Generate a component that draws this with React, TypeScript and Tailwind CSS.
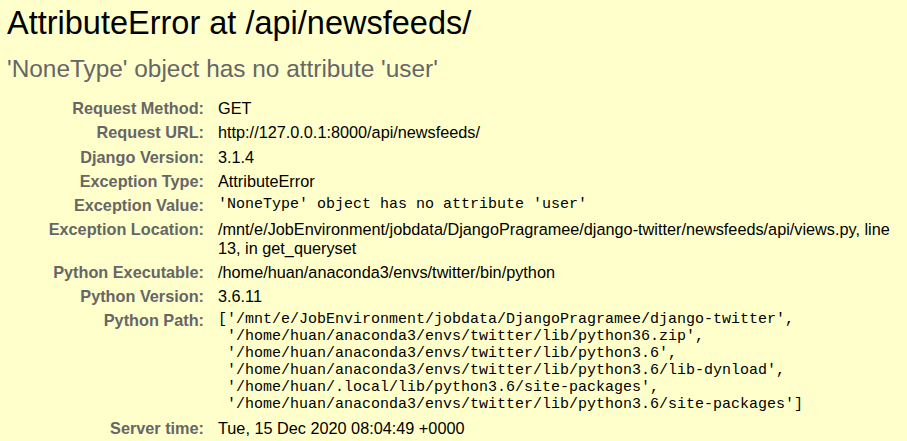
const SANS = "font-['Liberation_Sans',Arial,sans-serif]";

type Row = { label: string; value: React.ReactNode };

const PYTHON_PATH = [
  "['/mnt/e/JobEnvironment/jobdata/DjangoPragramee/django-twitter',",
  " '/home/huan/anaconda3/envs/twitter/lib/python36.zip',",
  " '/home/huan/anaconda3/envs/twitter/lib/python3.6',",
  " '/home/huan/anaconda3/envs/twitter/lib/python3.6/lib-dynload',",
  " '/home/huan/.local/lib/python3.6/site-packages',",
  " '/home/huan/anaconda3/envs/twitter/lib/python3.6/site-packages']",
].join("\n");

function Mono({ children }: { children: React.ReactNode }) {
  return (
    <pre className="m-0 whitespace-pre-wrap font-['Liberation_Mono','Courier_New',monospace] text-[15px] leading-[17px]">
      {children}
    </pre>
  );
}

const ROWS: Row[] = [
  { label: "Request Method:", value: "GET" },
  { label: "Request URL:", value: "http://127.0.0.1:8000/api/newsfeeds/" },
  { label: "Django Version:", value: "3.1.4" },
  { label: "Exception Type:", value: "AttributeError" },
  { label: "Exception Value:", value: <Mono>'NoneType' object has no attribute 'user'</Mono> },
  {
    label: "Exception Location:",
    value: "/mnt/e/JobEnvironment/jobdata/DjangoPragramee/django-twitter/newsfeeds/api/views.py, line 13, in get_queryset",
  },
  { label: "Python Executable:", value: "/home/huan/anaconda3/envs/twitter/bin/python" },
  { label: "Python Version:", value: "3.6.11" },
  { label: "Python Path:", value: <Mono>{PYTHON_PATH}</Mono> },
  { label: "Server time:", value: "Tue, 15 Dec 2020 08:04:49 +0000" },
];

export default function App() {
  return (
    <div className={`min-h-screen bg-[#ffffcc] pl-[7px] pr-[10px] pt-[5px] text-black ${SANS}`}>
      <h1 className="text-[32.5px] font-normal leading-[37.4px]">AttributeError at /api/newsfeeds/</h1>
      <h2 className="mt-[13px] text-[24.4px] font-normal leading-[28px] text-[#666]">
        'NoneType' object has no attribute 'user'
      </h2>
      <table className="mt-[13px] w-full border-collapse text-[16.25px] leading-[18.7px]">
        <tbody>
          {ROWS.map((row) => (
            <tr key={row.label}>
              <th className="w-[205px] py-[2.75px] pl-[3px] pr-[8px] text-right align-top font-bold text-[#666]">
                {row.label}
              </th>
              <td className="py-[2.75px] pl-[6px] pr-[3px] align-top">{row.value}</td>
            </tr>
          ))}
        </tbody>
      </table>
    </div>
  );
}
